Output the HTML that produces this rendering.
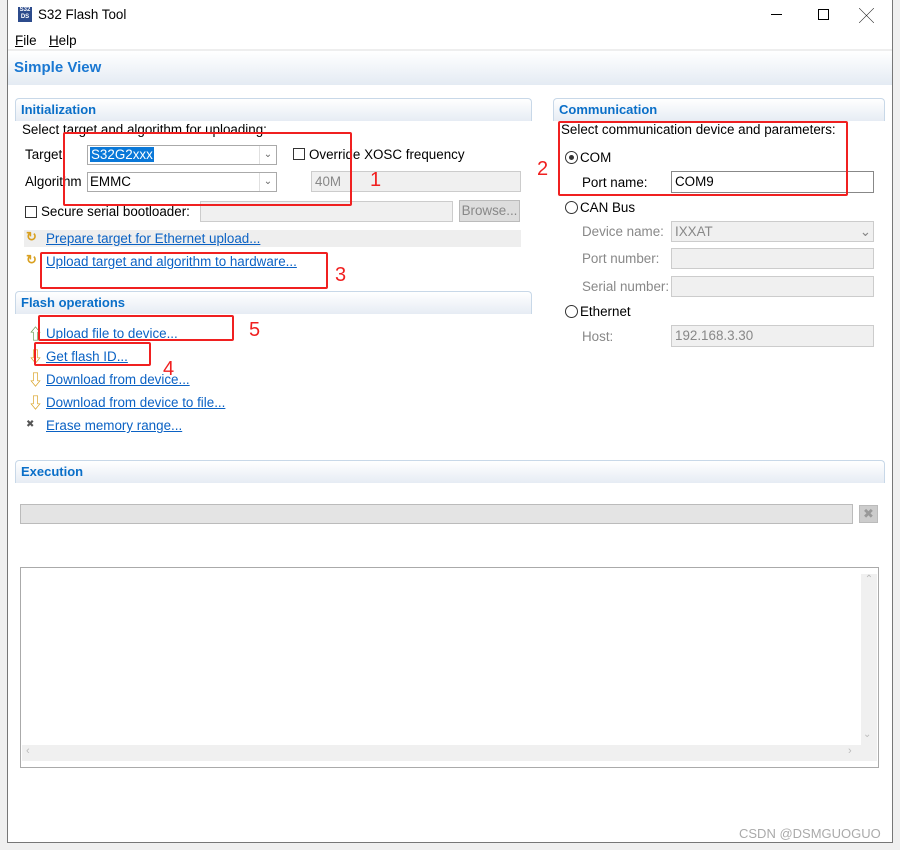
<!DOCTYPE html>
<html><head><meta charset="utf-8"><style>
*{margin:0;padding:0;box-sizing:border-box}
body{width:900px;height:850px;background:#f0f0f0;font-family:"Liberation Sans","Noto Sans CJK SC",sans-serif;font-size:13.4px;color:#000;position:relative;overflow:hidden}
.a{position:absolute;white-space:nowrap}
.win{position:absolute;left:7px;top:0;width:886px;height:843px;background:#fff;border:1px solid #777;border-top:none}
.sec{position:absolute;border:1px solid #c8d8e8;border-bottom:none;border-radius:4px 4px 0 0;background:linear-gradient(#fff,#e6ecf4);height:23px}
.sec span{position:absolute;left:5px;top:3px;color:#0a6fc8;font-weight:bold;font-size:13px}
.combo{position:absolute;border:1px solid #aaa;background:#fff;height:20px}
.combo .dd{position:absolute;right:0;top:0;width:17px;height:18px;border-left:1px solid #e0e0e0;color:#666;font-size:10px;text-align:center;line-height:18px}
.field{position:absolute;border:1px solid #ccc;background:#f0f0f0;height:21px;color:#888;padding-left:3px;line-height:19px}
.cb{position:absolute;width:12px;height:12px;border:1px solid #333;background:#fff}
.rad{position:absolute;width:13px;height:13px;border:1px solid #333;border-radius:50%;background:#fff}
.lnk{position:absolute;color:#0b62c4;text-decoration:underline;white-space:nowrap}
.red{position:absolute;border:2px solid #f02020;border-radius:2px}
.num{position:absolute;color:#f02020;font-size:20px}
.gr{color:#888}
.ar{position:absolute;font-weight:bold;font-size:15px}
</style></head><body>
<div class="win">
 <div class="a" style="left:10px;top:7px;width:14px;height:15px;background:#2c4b8c;color:#fff;font-size:6px;line-height:7px;text-align:center;font-weight:bold">S32<br>DS</div>
 <div class="a" style="left:30px;top:7px;font-size:13.4px">S32 Flash Tool</div>
 <div class="a" style="left:763px;top:14px;width:11px;height:1px;background:#000"></div>
 <div class="a" style="left:810px;top:9px;width:11px;height:11px;border:1px solid #000"></div>
 <div class="a" style="left:851px;top:5px;font-size:15px;font-weight:normal;color:#222">╳</div>
 <div class="a" style="left:7px;top:33px"><u>F</u>ile</div>
 <div class="a" style="left:41px;top:33px"><u>H</u>elp</div>
 <div class="a" style="left:0;top:49px;width:884px;height:36px;border-top:2px solid #eee;background:linear-gradient(#fff,#e4ebf3)"></div>
 <div class="a" style="left:6px;top:59px;color:#1a78d2;font-weight:bold;font-size:15px">Simple View</div>
</div>
<div class="sec" style="left:15px;top:98px;width:517px"><span>Initialization</span></div>
<div class="sec" style="left:553px;top:98px;width:332px"><span>Communication</span></div>
<div class="sec" style="left:15px;top:291px;width:517px"><span>Flash operations</span></div>
<div class="sec" style="left:15px;top:460px;width:870px"><span>Execution</span></div>

<div class="a" style="left:22px;top:122px">Select target and algorithm for uploading:</div>
<div class="a" style="left:25px;top:147px">Target</div>
<div class="combo" style="left:87px;top:145px;width:190px"><span class="a" style="left:2px;top:1px;background:#0a78d8;color:#fff;padding:0 1px">S32G2xxx</span><div class="dd">⌄</div></div>
<div class="cb" style="left:293px;top:148px"></div>
<div class="a" style="left:309px;top:147px">Override XOSC frequency</div>
<div class="a" style="left:25px;top:174px">Algorithm</div>
<div class="combo" style="left:87px;top:172px;width:190px"><span class="a" style="left:2px;top:1px">EMMC</span><div class="dd">⌄</div></div>
<div class="field" style="left:311px;top:171px;width:210px">40M</div>
<div class="cb" style="left:25px;top:206px"></div>
<div class="a" style="left:41px;top:204px">Secure serial bootloader:</div>
<div class="field" style="left:200px;top:201px;width:253px"></div>
<div class="field" style="left:459px;top:200px;width:61px;height:22px;background:#ddd;border-color:#bbb;text-align:center;padding:0">Browse...</div>
<div class="a" style="left:24px;top:230px;width:497px;height:17px;background:#eee"></div>
<div class="a" style="left:26px;top:229px;color:#d9a020;font-size:13px;font-weight:bold">↻</div>
<div class="lnk" style="left:46px;top:231px">Prepare target for Ethernet upload...</div>
<div class="a" style="left:26px;top:252px;color:#d9a020;font-size:13px;font-weight:bold">↻</div>
<div class="lnk" style="left:46px;top:254px">Upload target and algorithm to hardware...</div>

<div class="ar" style="left:28px;top:323px;color:#6a9a50">⇧</div>
<div class="lnk" style="left:46px;top:326px">Upload file to device...</div>
<div class="ar" style="left:28px;top:346px;color:#d9a020">⇩</div>
<div class="lnk" style="left:46px;top:349px">Get flash ID...</div>
<div class="ar" style="left:28px;top:369px;color:#d9a020">⇩</div>
<div class="lnk" style="left:46px;top:372px">Download from device...</div>
<div class="ar" style="left:28px;top:392px;color:#d9a020">⇩</div>
<div class="lnk" style="left:46px;top:395px">Download from device to file...</div>
<div class="a" style="left:26px;top:419px;color:#555;font-size:10px">✖</div>
<div class="lnk" style="left:46px;top:418px">Erase memory range...</div>

<div class="a" style="left:561px;top:122px">Select communication device and parameters:</div>
<div class="rad" style="left:565px;top:151px"><div class="a" style="left:3px;top:3px;width:5px;height:5px;border-radius:50%;background:#333"></div></div>
<div class="a" style="left:580px;top:150px">COM</div>
<div class="a" style="left:582px;top:175px">Port name:</div>
<div class="a" style="left:671px;top:171px;width:203px;height:22px;border:1px solid #888;background:#fff;padding:2px 3px">COM9</div>
<div class="rad" style="left:565px;top:201px"></div>
<div class="a" style="left:580px;top:200px">CAN Bus</div>
<div class="a gr" style="left:582px;top:224px">Device name:</div>
<div class="field" style="left:671px;top:221px;width:203px;height:21px">IXXAT<span class="a" style="right:2px;top:0">⌄</span></div>
<div class="a gr" style="left:582px;top:251px">Port number:</div>
<div class="field" style="left:671px;top:248px;width:203px"></div>
<div class="a gr" style="left:582px;top:279px">Serial number:</div>
<div class="field" style="left:671px;top:276px;width:203px"></div>
<div class="rad" style="left:565px;top:305px"></div>
<div class="a" style="left:580px;top:304px">Ethernet</div>
<div class="a gr" style="left:582px;top:329px">Host:</div>
<div class="field" style="left:671px;top:325px;width:203px;height:22px">192.168.3.30</div>

<div class="a" style="left:20px;top:504px;width:833px;height:20px;background:#e4e4e4;border:1px solid #bbb"></div>
<div class="a" style="left:859px;top:505px;width:19px;height:18px;background:#ccc;border:1px solid #bbb;color:#999;text-align:center;font-size:13px;line-height:16px">✖</div>
<div class="a" style="left:20px;top:567px;width:859px;height:201px;border:1px solid #aaa;background:#fff"></div>
<div class="a" style="left:861px;top:574px;width:16px;height:171px;background:#f0f0f0;color:#bbb;font-size:10px;text-align:center">⌃</div>
<div class="a" style="left:22px;top:745px;width:855px;height:16px;background:#f0f0f0;color:#bbb;font-size:11px;padding-left:4px">‹</div>
<div class="a" style="left:848px;top:745px;color:#bbb;font-size:11px">›</div>
<div class="a" style="left:863px;top:729px;color:#bbb;font-size:10px">⌄</div>

<div class="red" style="left:63px;top:132px;width:289px;height:74px"></div>
<div class="num" style="left:370px;top:169px">1</div>
<div class="red" style="left:558px;top:121px;width:290px;height:75px"></div>
<div class="num" style="left:537px;top:158px">2</div>
<div class="red" style="left:40px;top:252px;width:288px;height:37px"></div>
<div class="num" style="left:335px;top:264px">3</div>
<div class="red" style="left:38px;top:315px;width:196px;height:26px"></div>
<div class="num" style="left:249px;top:319px">5</div>
<div class="red" style="left:34px;top:342px;width:117px;height:24px"></div>
<div class="num" style="left:163px;top:358px">4</div>

<div class="a" style="left:739px;top:826px;color:#aaa;font-size:13px">CSDN @DSMGUOGUO</div>
</body></html>
